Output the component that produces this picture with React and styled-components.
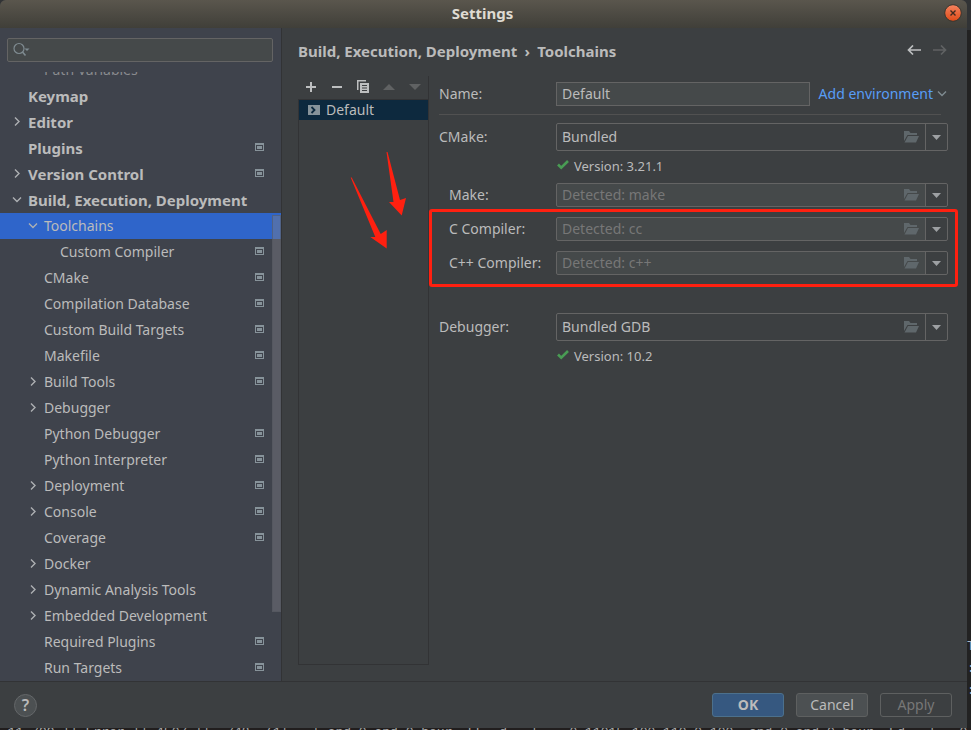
import React from 'react'
import styled, { createGlobalStyle } from 'styled-components'

const GlobalStyle = createGlobalStyle`
* { box-sizing: border-box; }
body {
margin: 0;
background: #222;
color: #bbbbbb;
font: 14px/26px "Noto Sans", sans-serif;
overflow: hidden;
}
button, input { font: inherit; color: inherit; }
`

const Desktop = styled('div')`
display: grid;
grid-template: minmax(0, 1fr) 2px / minmax(0, 1fr) 4px;
height: 100vh;
background: linear-gradient(#313335 30px, #222 30px);
`

const Dialog = styled('main')`
position: relative;
min-height: 0;
display: flex;
flex-direction: column;
background: #3c3f41;
border-radius: 6px 6px 0 0;
overflow: hidden;
`

const EditorEdge = styled('div')`
display: flex;
flex-direction: column;
justify-content: flex-end;
overflow: hidden;
padding-bottom: 26px;
color: #a9b7c6;
font: 13px/22px "Liberation Mono", monospace;
`

const Terminal = styled('div')`
grid-column: 1 / -1;
display: flex;
align-items: flex-start;
overflow: hidden;
background: #211e1e;
color: #aaaaaa;
font: 13px/10px "Liberation Mono", monospace;
white-space: pre;
`

const TitleBar = styled('header')`
flex: none;
height: 28px;
display: grid;
grid-template-columns: 1fr auto 1fr;
align-items: center;
padding: 0 5px 2px 3px;
background: linear-gradient(#5a564d, #403f39);
color: #dfdbd2;
`

const Title = styled('h1')`
grid-column: 2;
margin: 0;
font-size: 15px;
line-height: 24px;
`

const IconButton = styled('button')`
display: flex;
align-items: center;
justify-content: center;
width: 26px;
height: 20px;
padding: 0;
border: 0;
background: none;
color: ${({ disabled }) => (disabled ? '#606263' : '#bdbfc0')};
`

const CloseButton = styled(IconButton)`
justify-self: end;
width: 18px;
`

const Body = styled('div')`
flex: 1;
min-height: 0;
display: flex;
`

const Sidebar = styled('aside')`
flex: none;
width: 282px;
display: flex;
flex-direction: column;
background: #3f434c;
border-right: 1px solid #323335;
`

const SearchBox = styled('label')`
flex: none;
display: flex;
align-items: center;
height: 24px;
margin: 10px 8px 10px 7px;
padding-left: 5px;
background: #45494a;
border: 1px solid #646464;
border-radius: 2px;
`

const SearchInput = styled('input')`
flex: 1;
min-width: 0;
height: 20px;
border: 0;
outline: 0;
background: none;
`

const TreeArea = styled('div')`
position: relative;
flex: 1;
min-height: 0;
overflow: hidden;
display: flex;
flex-direction: column;
justify-content: flex-end;
`

const Tree = styled('ul')`
margin: 0;
padding: 0;
list-style: none;
`

const TreeItem = styled('li')`
display: flex;
align-items: center;
height: 26px;
padding-left: ${({ level }) => 11 + level * 16}px;
padding-right: 17px;
background: ${({ selected }) => (selected ? '#2f65ca' : 'none')};
font-weight: ${({ level }) => (level ? 400 : 700)};
font-size: ${({ level }) => (level ? 14 : 15)}px;
opacity: ${({ faded }) => (faded ? 0.6 : 1)};
white-space: nowrap;
`

const Twisty = styled('span')`
flex: none;
display: flex;
width: 17px;
`

const ItemLabel = styled('span')`
flex: 1;
`

const ScrollThumb = styled('div')`
position: absolute;
top: 143px;
right: 0;
width: 9px;
height: 397px;
background: rgba(128, 128, 136, 0.42);
border: 1px solid rgba(80, 84, 92, 0.5);
`

const Content = styled('section')`
flex: 1;
min-width: 0;
display: flex;
flex-direction: column;
padding: 10px 14px 16px 16px;
`

const Crumbs = styled('nav')`
flex: none;
display: flex;
align-items: center;
height: 26px;
margin-bottom: 12px;
font-size: 15px;
font-weight: 700;
white-space: nowrap;
`

const Separator = styled('span')`
width: 20px;
text-align: center;
`

const Spacer = styled('span')`
flex: 1;
`

const Columns = styled('div')`
flex: 1;
min-height: 0;
display: flex;
`

const ListPane = styled('div')`
flex: none;
width: 131px;
display: flex;
flex-direction: column;
border-right: 1px solid #323335;
`

const Toolbar = styled('div')`
flex: none;
display: flex;
align-items: center;
height: 23px;
padding-bottom: 2px;
`

const ToolchainList = styled('ul')`
flex: 1;
margin: 0;
padding: 0;
list-style: none;
border: solid #323335;
border-width: 1px 0 1px 1px;
`

const ToolchainItem = styled('li')`
display: flex;
align-items: center;
gap: 6px;
height: 20px;
padding-left: 9px;
background: #0d293e;
`

const Form = styled('form')`
flex: 1;
min-width: 0;
padding: 6px 5px 0 10px;
`

const Row = styled('div')`
display: flex;
align-items: center;
height: ${({ tall }) => (tall ? 28 : 24)}px;
margin-bottom: ${({ gap }) => gap || 0}px;
padding-left: ${({ indent }) => (indent ? 10 : 0)}px;
`

const FieldLabel = styled('label')`
flex: none;
width: ${({ indent }) => (indent ? 107 : 117)}px;
white-space: nowrap;
`

const NameInput = styled('input')`
flex: 1;
min-width: 0;
height: 24px;
padding: 0 5px;
background: #45494a;
border: 1px solid #646464;
outline: 0;
`

const EnvLink = styled('a')`
flex: none;
display: flex;
align-items: center;
gap: 3px;
margin-left: 9px;
color: #589df6;
text-decoration: none;
white-space: nowrap;
`

const Divider = styled('hr')`
height: 1px;
margin: 8px 7px 8px 0;
border: 0;
background: #515151;
`

const Combo = styled('div')`
flex: 1;
min-width: 0;
display: flex;
height: ${({ filled }) => (filled ? 24 : 28)}px;
background: ${({ filled }) => (filled ? 'linear-gradient(to left, #3c3f41 22px, #45494a 22px)' : 'none')};
border: 1px solid #646464;
border-radius: 2px;
`

const ComboInput = styled('input')`
flex: 1;
min-width: 0;
padding: 0 0 0 5px;
border: 0;
outline: 0;
background: none;
&::placeholder { color: #777777; opacity: 1; }
`

const ComboButton = styled('button')`
display: flex;
align-items: center;
justify-content: center;
width: 22px;
padding: 0;
border: 0;
border-left: 1px solid #646464;
background: none;
`

const BrowseButton = styled(ComboButton)`
width: 28px;
border: 0;
`

const Version = styled('p')`
display: flex;
align-items: center;
gap: 5px;
height: 20px;
margin: 5px 0 ${({ gap }) => gap || 0}px;
padding-left: 118px;
font-size: 13px;
`

const Highlight = styled('div')`
position: relative;
&::after {
content: '';
position: absolute;
inset: -8px -10px -12px -10px;
border: 3px solid #ff2010;
border-radius: 3px;
pointer-events: none;
}
`

const Arrows = styled('svg')`
position: absolute;
left: 349px;
top: 150px;
pointer-events: none;
`

const Footer = styled('footer')`
flex: none;
display: flex;
align-items: center;
gap: 12px;
height: 47px;
padding: 0 15px 0 14px;
border-top: 1px solid #323335;
`

const HelpButton = styled('button')`
width: 23px;
height: 23px;
padding: 0;
border: 1px solid #646769;
border-radius: 50%;
background: #4c5052;
font-size: 16px;
font-weight: 600;
line-height: 20px;
`

const variants = {
    primary: 'background: #365880; border-color: #4c708c; font-weight: 700;',
    normal: 'background: #4c5052; border-color: #5e6060;',
    disabled: 'background: none; border-color: #5e6060; color: #777777;',
}

const Button = styled('button')`
width: 72px;
height: 24px;
padding: 0;
border: 1px solid;
border-radius: 3px;
line-height: 20px;
${({ variant }) => variants[variant]}
`

const Chevron = ({ open, color = '#adb0b3' }) => (
    <svg width="12" height="12" viewBox="0 0 12 12" fill="none" stroke={color} strokeWidth="1.4">
        <path d={open ? 'M2 3.500l4 4 4-4' : 'M4 1.500l4 4-4 4'} />
    </svg>
)

const ProjectIcon = () => (
    <svg width="9" height="10" viewBox="0 0 9 10" fill="#87939a">
        <path fillRule="evenodd" d="M0 0h9v8H0zM1 2v5h7V2z" />
        <path d="M2 3h5v3H2z" />
    </svg>
)

const SearchIcon = () => (
    <svg width="18" height="16" viewBox="0 0 18 16" fill="none" stroke="#7f8b91">
        <circle cx="6" cy="6.500" r="5" strokeWidth="1.2" />
        <path d="M9.500 10l3 3.500" strokeWidth="1.6" />
        <path d="M11.500 6.500h5l-2.500 2.500z" fill="#7f8b91" stroke="none" />
    </svg>
)

const FolderIcon = () => (
    <svg width="15" height="12" viewBox="0 0 15 12" fill="#5f676b">
        <path d="M0 0h5l1.500 2H13v2H3.500L0 10z" />
        <path d="M4 5h11l-3 6.500H.5z" />
    </svg>
)

const Triangle = ({ up, width = 9, height = 5, color = '#9da0a3' }) => (
    <svg width={width} height={height} viewBox="0 0 10 6" preserveAspectRatio="none">
        <path fill={color} d={up ? 'M5 0l5 6H0z' : 'M0 0h10L5 6z'} />
    </svg>
)

const CheckIcon = () => (
    <svg width="12" height="12" viewBox="0 0 12 12" fill="none" stroke="#499c54" strokeWidth="2.600">
        <path d="M1 4.500l3.200 3.200L11 1" />
    </svg>
)

const ArrowIcon = ({ right }) => (
    <svg width="14" height="12" viewBox="0 0 14 12" fill="none" stroke="currentColor" strokeWidth="1.700">
        <path d={right ? 'M0 5h12M8 .5L12.500 5 8 9.500' : 'M14 5H2M6 .5L1.500 5 6 9.500'} />
    </svg>
)

const items = [
    { text: 'Path Variables', level: 1, faded: true },
    { text: 'Keymap', level: 0 },
    { text: 'Editor', level: 0, twisty: 'closed' },
    { text: 'Plugins', level: 0, project: true },
    { text: 'Version Control', level: 0, twisty: 'closed', project: true },
    { text: 'Build, Execution, Deployment', level: 0, twisty: 'open' },
    { text: 'Toolchains', level: 1, twisty: 'open', selected: true },
    { text: 'Custom Compiler', level: 2, project: true },
    { text: 'CMake', level: 1, project: true },
    { text: 'Compilation Database', level: 1, project: true },
    { text: 'Custom Build Targets', level: 1, project: true },
    { text: 'Makefile', level: 1, project: true },
    { text: 'Build Tools', level: 1, twisty: 'closed', project: true },
    { text: 'Debugger', level: 1, twisty: 'closed' },
    { text: 'Python Debugger', level: 1, project: true },
    { text: 'Python Interpreter', level: 1, project: true },
    { text: 'Deployment', level: 1, twisty: 'closed', project: true },
    { text: 'Console', level: 1, twisty: 'closed', project: true },
    { text: 'Coverage', level: 1, project: true },
    { text: 'Docker', level: 1, twisty: 'closed' },
    { text: 'Dynamic Analysis Tools', level: 1, twisty: 'closed' },
    { text: 'Embedded Development', level: 1, twisty: 'closed' },
    { text: 'Required Plugins', level: 1, project: true },
    { text: 'Run Targets', level: 1, project: true },
]

function SettingsTree() {
    return (
        <TreeArea>
            <Tree>
                {items.map(item => (
                    <TreeItem key={item.text} level={item.level} selected={item.selected} faded={item.faded}>
                        <Twisty>{item.twisty && <Chevron open={item.twisty === 'open'} />}</Twisty>
                        <ItemLabel>{item.text}</ItemLabel>
                        {item.project && <ProjectIcon />}
                    </TreeItem>
                ))}
            </Tree>
            <ScrollThumb />
        </TreeArea>
    )
}

function ToolField({ id, label, value, placeholder, indent, gap }) {
    return (
        <Row tall={!indent} indent={indent} gap={gap}>
            <FieldLabel htmlFor={id} indent={indent}>{label}</FieldLabel>
            <Combo filled={indent}>
                <ComboInput id={id} defaultValue={value} placeholder={placeholder} />
                <BrowseButton type="button" aria-label="Browse"><FolderIcon /></BrowseButton>
                <ComboButton type="button" aria-label="Show options"><Triangle /></ComboButton>
            </Combo>
        </Row>
    )
}

export default function App() {
    return (
        <Desktop>
            <GlobalStyle />
            <Dialog>
                <TitleBar>
                    <Title>Settings</Title>
                    <CloseButton aria-label="Close">
                        <svg width="18" height="18" viewBox="0 0 18 18">
                            <defs>
                                <linearGradient id="close" x2="0" y2="1">
                                    <stop stopColor="#f5835f" />
                                    <stop offset="1" stopColor="#df4b18" />
                                </linearGradient>
                            </defs>
                            <circle cx="9" cy="9" r="8.300" fill="url(#close)" stroke="#38362f" />
                            <path d="M6.500 6.500l5 5m0-5l-5 5" stroke="#3f2a20" strokeWidth="1.400" />
                        </svg>
                    </CloseButton>
                </TitleBar>
                <Body>
                    <Sidebar>
                        <SearchBox>
                            <SearchIcon />
                            <SearchInput aria-label="Search settings" />
                        </SearchBox>
                        <SettingsTree />
                    </Sidebar>
                    <Content>
                        <Crumbs>
                            <span>Build, Execution, Deployment</span>
                            <Separator>›</Separator>
                            <span>Toolchains</span>
                            <Spacer />
                            <IconButton aria-label="Back"><ArrowIcon /></IconButton>
                            <IconButton aria-label="Forward" disabled><ArrowIcon right /></IconButton>
                        </Crumbs>
                        <Columns>
                            <ListPane>
                                <Toolbar>
                                    <IconButton aria-label="Add">
                                        <svg width="10" height="10"><path d="M4 0h2v4h4v2H6v4H4V6H0V4h4z" fill="currentColor" /></svg>
                                    </IconButton>
                                    <IconButton aria-label="Remove">
                                        <svg width="10" height="2"><path d="M0 0h10v2H0z" fill="currentColor" /></svg>
                                    </IconButton>
                                    <IconButton aria-label="Copy">
                                        <svg width="12" height="13" fill="currentColor">
                                            <path d="M0 0h9v1.500H1.500V10H0z" />
                                            <path fillRule="evenodd" d="M3 3h9v10H3zM5 5v1h5V5zM5 7.500v1h5v-1zM5 10v1h5v-1z" />
                                        </svg>
                                    </IconButton>
                                    <IconButton aria-label="Move up" disabled>
                                        <Triangle up width={12} height={6} color="#606263" />
                                    </IconButton>
                                    <IconButton aria-label="Move down" disabled>
                                        <Triangle width={12} height={6} color="#606263" />
                                    </IconButton>
                                </Toolbar>
                                <ToolchainList>
                                    <ToolchainItem>
                                        <svg width="12" height="10">
                                            <path d="M0 0h12v10H0z" fill="#87939a" />
                                            <path d="M3.500 2l3 3-3 3" fill="none" stroke="#0d293e" strokeWidth="1.800" />
                                        </svg>
                                        Default
                                    </ToolchainItem>
                                </ToolchainList>
                            </ListPane>
                            <Form>
                                <Row>
                                    <FieldLabel htmlFor="name">Name:</FieldLabel>
                                    <NameInput id="name" defaultValue="Default" />
                                    <EnvLink href="#environment">
                                        Add environment
                                        <Chevron open color="#7f8b91" />
                                    </EnvLink>
                                </Row>
                                <Divider />
                                <ToolField id="cmake" label="CMake:" value="Bundled" />
                                <Version gap={7}><CheckIcon />Version: 3.21.1</Version>
                                <ToolField id="make" label="Make:" placeholder="Detected: make" indent gap={10} />
                                <Highlight>
                                    <ToolField id="cc" label="C Compiler:" placeholder="Detected: cc" indent gap={10} />
                                    <ToolField id="cxx" label="C++ Compiler:" placeholder="Detected: c++" indent />
                                </Highlight>
                                <Row gap={14} />
                                <ToolField id="debugger" label="Debugger:" value="Bundled GDB" />
                                <Version><CheckIcon />Version: 10.2</Version>
                            </Form>
                        </Columns>
                    </Content>
                </Body>
                <Footer>
                    <HelpButton aria-label="Help">?</HelpButton>
                    <Spacer />
                    <Button variant="primary">OK</Button>
                    <Button variant="normal">Cancel</Button>
                    <Button variant="disabled" disabled>Apply</Button>
                </Footer>
                <Arrows width="60" height="100" fill="#ff2010">
                    <path d="M37.500 2h1L51 50l6-2-4.300 17.500L40 52h4.500z" />
                    <path d="M1.700 27.500h1L31.700 84l6-4v18.500L21.300 87h5z" />
                </Arrows>
            </Dialog>
            <EditorEdge>
                <span>T</span>
                <span>:</span>
                <span>:</span>
            </EditorEdge>
            <Terminal>
                {' 11 799 || Error || 4507 ||  748  (1| . | and 0 and 0 hour  EE  d . | .  0 11015 100 110 0 100  and 0 and 0 hour  Ed . | . 0 11015 100 110 255 15'}
            </Terminal>
        </Desktop>
    )
}
